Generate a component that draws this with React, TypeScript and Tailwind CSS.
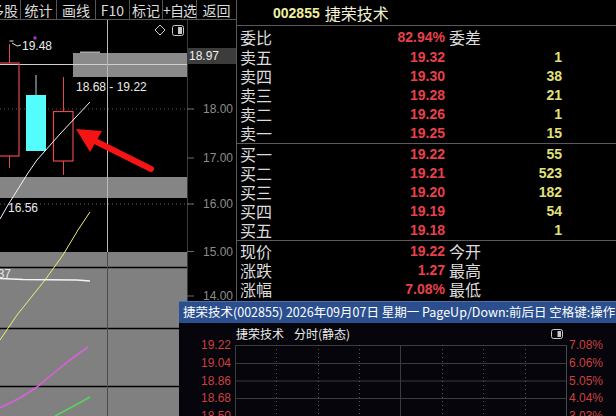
import React from "react";

const CJK = "font-['Noto_Sans_CJK_SC',sans-serif]";
const NUM = "font-['Liberation_Sans',Arial,sans-serif]";

const tools = [
  { label: "多股", cls: "w-[21px] justify-end pr-[2px]" },
  { label: "统计", cls: "w-[36px] justify-center" },
  { label: "画线", cls: "w-[39px] justify-center" },
  { label: "F10", cls: "w-[34px] justify-center" },
  { label: "标记", cls: "w-[33px] justify-center" },
  { label: "+自选", cls: "w-[34px] justify-center tracking-[-1px]" },
  { label: "返回", cls: "w-[39px] justify-center border-r-0" },
];

const sell = [
  ["卖五", "19.32", "1"],
  ["卖四", "19.30", "38"],
  ["卖三", "19.28", "21"],
  ["卖二", "19.26", "1"],
  ["卖一", "19.25", "15"],
];

const buy = [
  ["买一", "19.22", "55"],
  ["买二", "19.21", "523"],
  ["买三", "19.20", "182"],
  ["买四", "19.19", "54"],
  ["买五", "19.18", "1"],
];

const stats = [
  ["现价", "19.22", "今开"],
  ["涨跌", "1.27", "最高"],
  ["涨幅", "7.08%", "最低"],
  ["总量", "", "量比"],
];

const axis = [
  { y: 109, v: "18.00" },
  { y: 158, v: "17.00" },
  { y: 204, v: "16.00" },
  { y: 251.5, v: "15.00" },
  { y: 296, v: "14.00" },
];

const minuteRows = [
  { y: 0, p: "19.22", r: "7.08%" },
  { y: 18, p: "19.04", r: "6.06%" },
  { y: 35.5, p: "18.86", r: "5.05%" },
  { y: 53, p: "18.68", r: "4.04%" },
  { y: 71, p: "18.50", r: "3.03%" },
];

function Toolbar() {
  return (
    <div className={`h-[20px] border-b border-[#555] flex shrink-0 ${CJK}`}>
      {tools.map((t) => (
        <div
          key={t.label}
          className={`h-full flex items-center overflow-hidden whitespace-nowrap border-r border-[#555] text-[14px] leading-none text-[#dcdcdc] ${t.cls}`}
        >
          {t.label}
        </div>
      ))}
    </div>
  );
}

function KChart() {
  const red = "#e5484d";
  return (
    <svg
      width={236}
      height={396}
      viewBox="0 20 236 396"
      className="block"
      fontFamily="'Liberation Sans', Arial, sans-serif"
      fontSize={12}
    >
      {/* selection bands */}
      <rect x={73} y={53} width={114} height={24} fill="#8a8a8a" />
      <rect x={80} y={51.5} width={20} height={1.5} fill="#a8a8a8" />
      <rect x={0} y={177} width={187} height={21} fill="#858585" />
      <rect x={0} y={252} width={187} height={164} fill="#808080" />

      {/* grid */}
      <line x1={0} y1={109} x2={193} y2={109} stroke="#555" strokeDasharray="1 3" />
      <line x1={0} y1={204} x2={193} y2={204} stroke="#666" strokeDasharray="1 3" />
      <line x1={0} y1={267.5} x2={187} y2={267.5} stroke="#000" strokeWidth={1.3} />
      <line x1={0} y1={328.5} x2={187} y2={328.5} stroke="#000" strokeWidth={1.3} />
      <line x1={0} y1={386.5} x2={187} y2={386.5} stroke="#000" strokeWidth={1.3} />
      <line x1={0} y1={64.5} x2={187} y2={64.5} stroke="#d0d0d0" />

      {/* crosshair */}
      <line x1={107.5} y1={20} x2={107.5} y2={252} stroke="#b8b8b8" />
      <line x1={107.5} y1={252} x2={107.5} y2={416} stroke="#4c4c4c" />

      {/* axis */}
      <line x1={187.5} y1={20} x2={187.5} y2={416} stroke="#3a3a3a" />
      {axis.map((a) => (
        <g key={a.v}>
          <line x1={187} y1={a.y} x2={194} y2={a.y} stroke="#6a6a6a" />
          <text x={203} y={a.y + 4.3} fill="#8c8c8c">
            {a.v}
          </text>
        </g>
      ))}
      <rect x={188} y={48} width={48} height={16} fill="#3c3c3c" />
      <text x={189} y={60} fill="#f0f0f0">
        18.97
      </text>

      {/* candles */}
      <line x1={9.5} y1={44} x2={9.5} y2={63} stroke={red} />
      <line x1={9.5} y1={156} x2={9.5} y2={168} stroke={red} />
      <rect x={-2} y={63} width={21} height={93} fill="none" stroke={red} strokeWidth={1.2} />
      <path d="M9.5 41 H13.5 M12 43 L17 46 L21 45" stroke="#e0e0e0" fill="none" />
      <rect x={33.5} y={36.5} width={3} height={3} fill="#9a3cc8" />

      <line x1={36} y1={75} x2={36} y2={95} stroke="#b8d8d8" />
      <rect x={26} y={95} width={20} height={56} fill="#54fcfc" />

      <line x1={63.5} y1={77} x2={63.5} y2={111.5} stroke={red} />
      <line x1={63.5} y1={161} x2={63.5} y2={175} stroke={red} />
      <rect x={53.5} y={111.5} width={19.5} height={49.5} fill="none" stroke={red} strokeWidth={1.2} />

      {/* moving averages */}
      <polyline
        points="0,219 8,205 18,189 28,173 37,160 60,134 90,102"
        fill="none"
        stroke="#f4f4f4"
      />
      <polyline
        points="90,212 78,230 63,255 45,280 37,290 17,315 0,340"
        fill="none"
        stroke="#f0f070"
      />
      <polyline points="0,278.5 23,279.5 77,280 90,281" fill="none" stroke="#f4f4f4" strokeWidth={1.5} />
      <polyline
        points="88,347 70,360 55,372 37,387 20,398 0,408"
        fill="none"
        stroke="#d860d8"
        strokeWidth={1.6}
      />
      <polyline points="55,416 72,407 90,397" fill="none" stroke="#5cd05c" strokeWidth={1.6} />

      {/* labels */}
      <text x={22} y={50} fill="#ececec">
        19.48
      </text>
      <text x={76} y={91} fill="#ececec">
        18.68 - 19.22
      </text>
      <text x={8} y={211.5} fill="#ececec">
        16.56
      </text>
      <text x={11} y={278} fill="#e8e8e8" textAnchor="end">
        14.37
      </text>

      {/* toolbar icons */}
      <polygon points="160,25 165,30 160,35 155,30" fill="none" stroke="#d0d0d0" />
      <rect x={172.5} y={25.5} width={11} height={10} rx={2} fill="none" stroke="#c8c8c8" />
      <rect x={178} y={27} width={4} height={7} fill="#c8c8c8" />

      {/* arrow */}
      <line x1={93} y1={140} x2={151} y2={169} stroke="#f41414" strokeWidth={6} strokeLinecap="round" />
      <polygon points="76,129 102,131 90,152" fill="#f41414" />
    </svg>
  );
}

function Row({
  label,
  value,
  mid,
  vol,
  h,
}: {
  label: string;
  value: string;
  mid?: string;
  vol?: string;
  h: string;
}) {
  return (
    <div className={`flex items-center ${h}`}>
      <span className={`w-[140px] pl-[3px] text-[16px] leading-none text-[#dcdcdc] ${CJK}`}>{label}</span>
      <span className={`w-[68px] text-right text-[14px] leading-none font-bold text-[#e8404c] ${NUM}`}>
        {value}
      </span>
      <span className="w-[117px] pl-[4px] flex items-center justify-between">
        <span className={`text-[16px] leading-none text-[#dcdcdc] ${CJK}`}>{mid}</span>
        <span className={`text-[14px] leading-none font-bold text-[#e0e07c] ${NUM}`}>{vol}</span>
      </span>
    </div>
  );
}

function QuotePanel() {
  return (
    <div className="flex-1 border-l border-[#5a5a5a] bg-black flex flex-col">
      <div className="h-[26px] border-b border-[#5a5a5a] flex items-center pl-[36px] gap-[5px] shrink-0">
        <span className={`text-[14px] leading-none font-bold text-[#f0f0a0] ${NUM}`}>002855</span>
        <span className={`text-[16px] leading-none text-[#f0f0d4] ${CJK}`}>捷荣技术</span>
      </div>
      <Row label="委比" value="82.94%" mid="委差" h="h-[21px]" />
      {sell.map(([l, v, n]) => (
        <Row key={l} label={l} value={v} vol={n} h="h-[19px]" />
      ))}
      <div className="h-px mt-px bg-[#5a5a5a] shrink-0" />
      {buy.map(([l, v, n]) => (
        <Row key={l} label={l} value={v} vol={n} h="h-[19px]" />
      ))}
      <div className="h-px mt-px bg-[#5a5a5a] shrink-0" />
      {stats.map(([l, v, m]) => (
        <Row key={l} label={l} value={v} mid={m} h="h-[19px]" />
      ))}
    </div>
  );
}

function MinutePopup() {
  const vlines = [1, 2, 3, 5, 6, 7].map((k) => 56 + (331 / 8) * k);
  return (
    <div className="absolute left-[179px] top-[301px] right-0 bottom-0 bg-[#05050b] flex flex-col">
      <div
        className={`h-[22px] shrink-0 bg-[#2b4f8e] border-t border-[#4a70ad] text-white text-[12.5px] leading-none flex items-center pl-[4px] whitespace-nowrap overflow-hidden ${CJK}`}
      >
        捷荣技术(002855) 2026年09月07日 星期一 PageUp/Down:前后日 空格键:操作
      </div>
      <div className={`h-[22px] shrink-0 flex items-center pl-[57px] pr-[53px] text-[12px] leading-none text-[#ececec] ${CJK}`}>
        <span>捷荣技术</span>
        <span className="ml-[10px]">分时(静态)</span>
        <svg className="ml-auto" width={12} height={10} viewBox="0 0 12 10">
          <rect x={0.5} y={0.5} width={11} height={9} rx={2} fill="none" stroke="#c8c8c8" />
          <rect x={6.5} y={2} width={3.5} height={6} fill="#c8c8c8" />
        </svg>
      </div>
      <svg
        width={437}
        height={71}
        overflow="visible"
        className="block"
        fontFamily="'Liberation Sans', Arial, sans-serif"
        fontSize={12}
      >
        {minuteRows.map((r) => (
          <g key={r.p}>
            <line x1={56} y1={r.y + 0.5} x2={387} y2={r.y + 0.5} stroke="#3c3c3c" />
            <text x={52} y={r.y + 4.3} fill="#cc4040" textAnchor="end">
              {r.p}
            </text>
            <text x={390} y={r.y + 4.3} fill="#cc4040">
              {r.r}
            </text>
          </g>
        ))}
        <line x1={56.5} y1={0} x2={56.5} y2={71} stroke="#3c3c3c" />
        <line x1={387.5} y1={0} x2={387.5} y2={71} stroke="#4a4a4a" />
        <line x1={221.5} y1={0} x2={221.5} y2={71} stroke="#3c3c3c" />
        {vlines.map((x) => (
          <line key={x} x1={Math.round(x) + 0.5} y1={0} x2={Math.round(x) + 0.5} y2={71} stroke="#555" strokeDasharray="1 3" />
        ))}
      </svg>
    </div>
  );
}

export default function App() {
  return (
    <div className="relative w-[616px] h-[416px] overflow-hidden bg-black flex">
      <div className="w-[236px] shrink-0 flex flex-col">
        <Toolbar />
        <KChart />
      </div>
      <QuotePanel />
      <MinutePopup />
    </div>
  );
}
